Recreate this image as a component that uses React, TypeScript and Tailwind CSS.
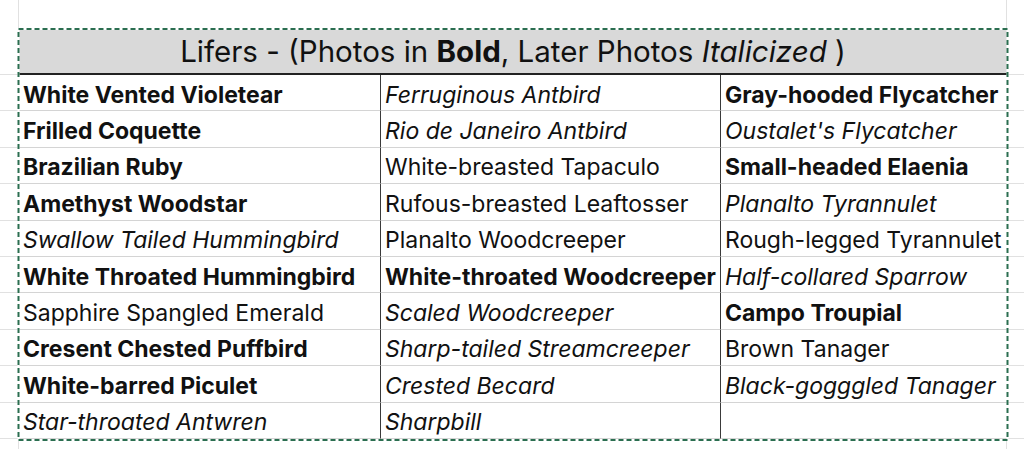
import React from "react";

type W = "b" | "i" | "n";
const cols: [string, W][][] = [
  [
    ["White Vented Violetear", "b"],
    ["Frilled Coquette", "b"],
    ["Brazilian Ruby", "b"],
    ["Amethyst Woodstar", "b"],
    ["Swallow Tailed Hummingbird", "i"],
    ["White Throated Hummingbird", "b"],
    ["Sapphire Spangled Emerald", "n"],
    ["Cresent Chested Puffbird", "b"],
    ["White-barred Piculet", "b"],
    ["Star-throated Antwren", "i"],
  ],
  [
    ["Ferruginous Antbird", "i"],
    ["Rio de Janeiro Antbird", "i"],
    ["White-breasted Tapaculo", "n"],
    ["Rufous-breasted Leaftosser", "n"],
    ["Planalto Woodcreeper", "n"],
    ["White-throated Woodcreeper", "b"],
    ["Scaled Woodcreeper", "i"],
    ["Sharp-tailed Streamcreeper", "i"],
    ["Crested Becard", "i"],
    ["Sharpbill", "i"],
  ],
  [
    ["Gray-hooded Flycatcher", "b"],
    ["Oustalet's Flycatcher", "i"],
    ["Small-headed Elaenia", "b"],
    ["Planalto Tyrannulet", "i"],
    ["Rough-legged Tyrannulet", "n"],
    ["Half-collared Sparrow", "i"],
    ["Campo Troupial", "b"],
    ["Brown Tanager", "n"],
    ["Black-gogggled Tanager", "i"],
    ["", "n"],
  ],
];

function cls(w: W) {
  if (w === "b") return "font-bold";
  if (w === "i") return "italic";
  return "font-normal";
}

function Cell({ text, w, width, last }: { text: string; w: W; width: string; last?: boolean }) {
  return (
    <div
      className={`${width} h-full flex items-center pl-[4px] pt-[5px] whitespace-nowrap overflow-visible border-b border-[#d4d4d4] ${
        last ? "" : "border-r border-r-[#3a3a3a]"
      } ${cls(w)}`}
    >
      {text}
    </div>
  );
}

export default function App() {
  const rows = Array.from({ length: 10 }, (_, r) => r);
  return (
    <div
      className="relative w-[1024px] h-[449px] bg-white overflow-hidden text-black"
      style={{ fontFamily: "Inter, 'Noto Sans', sans-serif" }}
    >
      <div className="flex flex-col">
        {/* top spacer row */}
        <div className="flex h-[29px]">
          <div className="w-[19px] border-r border-[#e1e1e1]" />
          <div className="w-[988px] border-r border-[#e1e1e1]" />
          <div className="flex-1" />
        </div>
        {/* header */}
        <div className="flex h-[46px]">
          <div className="w-[19px] border-b border-[#e1e1e1]" />
          <div className="w-[988px] bg-[#d9d9d9] border-b-2 border-[#222] flex items-center justify-center pt-[2px] text-[29.5px] leading-none text-[#111]">
            <span>
              Lifers - (Photos in <b>Bold</b>, Later Photos <i>Italicized</i> )
            </span>
          </div>
          <div className="flex-1 border-b border-[#e1e1e1]" />
        </div>
        {rows.map((r) => (
          <div key={r} className="flex h-[36.4px] text-[23px] leading-none text-[#111]">
            <div className="w-[19px] border-b border-[#e1e1e1]" />
            <Cell text={cols[0][r][0]} w={cols[0][r][1]} width="w-[362px]" />
            <Cell text={cols[1][r][0]} w={cols[1][r][1]} width="w-[340px]" />
            <Cell text={cols[2][r][0]} w={cols[2][r][1]} width="w-[286px]" last />
            <div className="flex-1 border-b border-[#e1e1e1]" />
          </div>
        ))}
        <div className="flex h-[10px]">
          <div className="w-[19px] border-r border-[#e1e1e1]" />
          <div className="w-[988px] border-r border-[#e1e1e1]" />
          <div className="flex-1" />
        </div>
      </div>
      {/* selection marching ants */}
      <svg
        className="absolute left-[17px] top-[28px] pointer-events-none"
        width="992"
        height="414"
        viewBox="0 0 992 414"
      >
        <rect x="1.5" y="1" width="989" height="411" fill="none" stroke="#ffffff" strokeWidth="2" />
        <rect
          x="1.5"
          y="1"
          width="989"
          height="411"
          fill="none"
          stroke="#2b6e50"
          strokeWidth="2"
          strokeDasharray="5 3"
        />
      </svg>
    </div>
  );
}
